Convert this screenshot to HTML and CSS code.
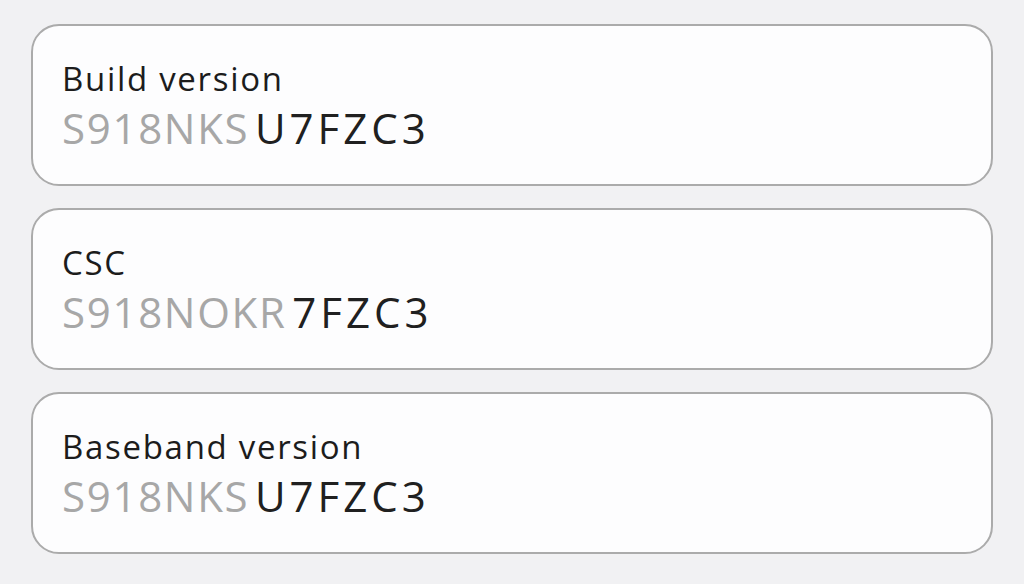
FILE: index.html
```html
<!DOCTYPE html>
<html lang="en">
<head>
<meta charset="utf-8">
<title>Software information</title>
<link rel="stylesheet" href="styles.css">
</head>
<body>
<main class="list">
  <section class="card">
    <div class="title">Build version</div>
    <div class="value"><span class="dim">S918NKS</span> <span class="strong">U7FZC3</span></div>
  </section>
  <section class="card">
    <div class="title">CSC</div>
    <div class="value"><span class="dim">S918NOKR</span> <span class="strong">7FZC3</span></div>
  </section>
  <section class="card">
    <div class="title">Baseband version</div>
    <div class="value"><span class="dim">S918NKS</span> <span class="strong">U7FZC3</span></div>
  </section>
</main>
</body>
</html>
```

FILE: styles.css
```css
html, body {
  margin: 0;
  padding: 0;
  background: #f1f1f3;
}
body {
  font-family: "Open Sans", "Noto Sans", sans-serif;
  width: 1024px;
  height: 584px;
  overflow: hidden;
}
.list {
  display: flex;
  flex-direction: column;
  gap: 22px;
  padding: 24px 31px 0 31px;
}
.card {
  box-sizing: border-box;
  height: 162px;
  background: #fdfdfe;
  border: 2px solid #ababab;
  border-radius: 28px;
  display: flex;
  flex-direction: column;
  padding: 30px 29px 0 29px;
}
.title {
  font-size: 33px;
  line-height: 45px;
  letter-spacing: 1.7px;
  color: #1c1c1c;
}
.value {
  font-size: 42px;
  line-height: 54px;
  letter-spacing: 1.7px;
  word-spacing: -7px;
  white-space: nowrap;
}
.dim { color: #a7a7a7; }
.strong { color: #202020; letter-spacing: 4px; }
```
